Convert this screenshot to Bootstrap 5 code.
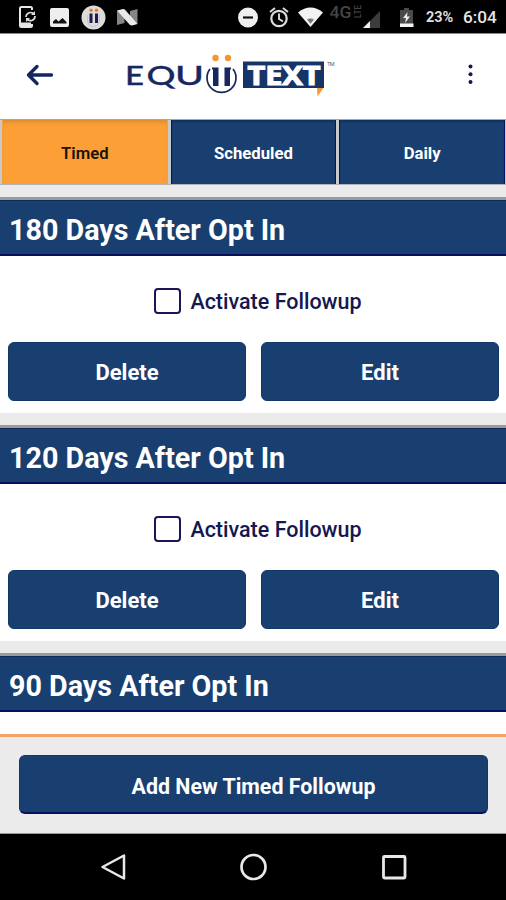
<!DOCTYPE html>
<html lang="en">
<head>
<meta charset="utf-8">
<meta name="viewport" content="width=device-width, initial-scale=1">
<title>EquiiText – Timed Followups</title>
<link href="https://cdn.jsdelivr.net/npm/bootstrap@5.3.0/dist/css/bootstrap.min.css" rel="stylesheet">
<style>
  :root { --navy: #183f70; --ink: #15174f; --orange: #fc9f36; --mist: #ebebeb; }
  body { font-family: Roboto, "Liberation Sans", sans-serif; background: #fff; }
  svg { display: block; flex: none; }
  .screen { height: 900px; width: 506px; }
  .status-bar { height: 34px; padding: 2px 10px 0 18px; border-bottom: 1px solid #8d888b; }
  .status-bar svg { margin-top: -2px; }
  .status-pct { font-size: 14.5px; width: 37px; letter-spacing: -.1px; color: #ddd; padding-top: 1px; }
  .status-time { font-size: 17.2px; width: 33px; color: #e6e6e6; padding-top: 1px; }
  .app-bar { height: 85px; padding: 0 30px 3px 26px; }
  .brand-logo { margin-left: 72px; }
  .app-tabs { height: 66px; background: #c9c9cc; border-top: 1px solid #aaa; border-bottom: 1px solid #b4b4b6; padding: 0 1px 0 2px; gap: 3px; }
  .app-tabs .nav-link { border-radius: 0; background: var(--navy); color: #fff; font-size: 16.7px; font-weight: 700; padding: 3px 0 0; border: solid #06146a; border-width: 0 1px 0 1px; box-shadow: inset 0 2px 1px #12315c; }
  .app-tabs .nav-link.active { background: var(--orange); color: #1c1208; font-weight: 600; border-color: var(--orange); box-shadow: inset 0 4px 4px -2px #d58a35; }
  .followups { height: 549px; background: var(--mist); }
  .followup { height: 216px; margin-top: 12px; border-top: 3px solid #9b9b9b; background: #fff; }
  .followup h2 { height: 56px; background: var(--navy); color: #fff; font-size: 28.7px; font-weight: 700; padding: 5px 0 0 9px; border-bottom: 2px solid #06105f; border-top: 1px solid #0d2c59; }
  .activate { height: 86px; padding-top: 7px; padding-left: 10px; gap: 9px; color: var(--ink); font-size: 21.5px; font-weight: 500; }
  .activate .form-check-input { width: 27px; height: 26px; margin: 0 0 4px; border: 2px solid #1a1458; border-radius: 4px; }
  .btn-navy, .btn-navy:hover { background: var(--navy); color: #fff; font-size: 22px; font-weight: 700; height: 59px; border: 1px solid #123869; border-radius: 6px; padding: 2px 0 0; }
  .pair { padding: 0 7px 0 8px; gap: 15px; }
  .footer-bar { height: 100px; background: var(--mist); border-top: 3px solid #f3a268; padding: 18px 18px 0 19px; border-bottom: 1px solid #999; }
  .footer-bar .btn-navy { border-bottom: 2px solid #05105f; font-size: 21.4px; padding-top: 6px; }
  .nav-keys { height: 67px; padding-bottom: 2px; }
</style>
</head>
<body>
<div class="screen d-flex flex-column overflow-hidden">
  <div class="status-bar bg-black text-white d-flex align-items-center flex-shrink-0">
    <svg width="32" height="34" viewBox="18 0 32 34"><path d="M32 10V8.500q0-1.500-1.500-1.500h-9q-1.500 0-1.500 1.500v17q0 1.500 1.500 1.500h9q1.500 0 1.500-1.500V24" fill="none" stroke="#e6e6e6" stroke-width="2"/><path d="M20 22.500h11v4H20z" fill="#e6e6e6"/><path d="M26 17a4.500 4.500 0 0 1 7.500-3.300M35 16a4.500 4.500 0 0 1-7.500 3.500" fill="none" stroke="#ddd" stroke-width="1.700"/><path d="M31 15l4-4v4zM30 18l-4 4v-4z" fill="#ddd"/></svg>
    <svg width="31" height="34" viewBox="50 0 31 34"><rect x="50" y="8" width="19" height="19" rx="2" fill="#eee"/><path d="M53 23.500v-2l3-2.500 2.500 2.500 4-3.500 4 4v1.500z" fill="#111"/></svg>
    <svg width="36" height="34" viewBox="81 0 36 34"><circle cx="93.500" cy="17.500" r="12" fill="#dcdcda"/><path d="M87.500 15v5.500a6 6 0 0 0 12 0V15" fill="none" stroke="#c2c4d2"/><path d="M89.500 13.500h3v9.500h-3zM95 13.500h3V23h-3z" fill="#191c55"/><circle cx="91" cy="10.300" r="1.700" fill="#e3812d"/><circle cx="96.500" cy="10.300" r="1.700" fill="#e3812d"/></svg>
    <svg width="22" height="34" viewBox="117 0 22 34"><path d="M117 10.500l7.500 4v8.500l-7.500 2zM130 11l7.500-2v15l-7.500-4z" fill="#858585"/><path d="M117 10.500l6-1.500q1.500 0 2.500 1.200L137.500 24l-5.500 1.500q-1.500 0-2.500-1z" fill="#e9e9e9"/></svg>
    <svg class="ms-auto" width="31" height="34" viewBox="238 0 31 34"><circle cx="248" cy="17.500" r="10" fill="#eee"/><path d="M243 17.500h10" stroke="#111" stroke-width="2.200"/></svg>
    <svg width="29" height="34" viewBox="269 0 29 34"><circle cx="279" cy="18.500" r="7.700" fill="none" stroke="#ddd" stroke-width="2.200"/><path d="M279 13.500v5.500l4 2.500M270 12l5-4M288 12l-5-4" fill="none" stroke="#ddd" stroke-width="1.900"/></svg>
    <svg width="30" height="34" viewBox="298 0 30 34"><path d="M298 12.500q12.500-10 25 0L310.500 27z" fill="#f2f2f2"/><path d="M307 19.500q3.500-2 7 0l-3.500 4.300z" fill="#777"/></svg>
    <svg width="72" height="34" viewBox="328 0 72 34"><text x="329.500" y="17.500" font-size="17" font-weight="500" fill="#454545" textLength="22" lengthAdjust="spacingAndGlyphs">4G</text><text transform="translate(360.500 18) rotate(-90)" font-size="9" font-weight="500" fill="#454545" textLength="13" lengthAdjust="spacingAndGlyphs">LTE</text><path d="M380 11v17h-17z" fill="#3c3c3c"/><path d="M370 21v7h-7z" fill="#eee"/></svg>
    <svg width="26" height="34" viewBox="400 0 26 34"><path d="M404 8h5v2h4v17h-13V10h4z" fill="#4a4a4a"/><path d="M400 23.500h13.500V27H400z" fill="#f4f4f4"/><path d="M407.500 12l-4.500 6h3l-1 5 5-6.500h-3z" fill="#eee"/></svg>
    <span class="status-pct fw-bold">23%</span>
    <span class="status-time fw-medium text-nowrap">6:04</span>
  </div>

  <header class="app-bar d-flex align-items-center flex-shrink-0 bg-white">
    <svg width="28" height="30" viewBox="0 0 28 30"><path d="M25.500 15H2.500M11 6.500L2.500 15l8.500 8.500" fill="none" stroke="#15265f" stroke-width="3.400" stroke-linecap="round" stroke-linejoin="round"/></svg>
    <svg class="brand-logo" width="212" height="46" viewBox="126 52 212 46" role="img" aria-label="EQUii TEXT">
      <g font-family="Lato, sans-serif" fill="#17275f" font-size="27" font-weight="500" stroke="#17275f" stroke-width=".3">
        <text x="125" y="84.500" textLength="19" lengthAdjust="spacingAndGlyphs">E</text>
        <text x="146.500" y="84.500" textLength="29" lengthAdjust="spacingAndGlyphs">Q</text>
        <text x="175" y="84.500" textLength="29" lengthAdjust="spacingAndGlyphs">U</text>
      </g>
      <path d="M210 69a14.500 14.500 0 1 0 23 0" fill="none" stroke="#17275f" stroke-width="1.700"/>
      <path d="M212 67.500h6.500V86H213V69.500h-1zM224.500 67.500h6.500v2h-1V86h-5.500z" fill="#17275f"/>
      <circle cx="215.500" cy="58" r="3.200" fill="#f6952b"/><circle cx="228" cy="58" r="3.200" fill="#f6952b"/>
      <path d="M243 61.500h81v26.500h-81z" fill="#173468"/>
      <path d="M317 88h6.500l-6 8.500z" fill="#f79a2f"/>
      <text x="247.500" y="85" font-family="Open Sans, sans-serif" font-size="27" font-weight="700" fill="#fff" stroke="#fff" stroke-width="1.200" textLength="73" lengthAdjust="spacingAndGlyphs">TEXT</text>
      <text x="327" y="65.500" font-size="5.500" fill="#555b7c" textLength="7.500">TM</text>
    </svg>
    <svg class="ms-auto" width="12" height="26" viewBox="0 0 12 26"><g fill="#14164f"><circle cx="6.500" cy="4.500" r="2"/><circle cx="6.500" cy="12.300" r="2"/><circle cx="6.500" cy="20" r="2"/></g></svg>
  </header>

  <ul class="app-tabs nav nav-justified flex-nowrap flex-shrink-0 align-items-stretch">
    <li class="nav-item d-flex"><a class="nav-link active w-100 d-flex align-items-center justify-content-center" href="#">Timed</a></li>
    <li class="nav-item d-flex"><a class="nav-link w-100 d-flex align-items-center justify-content-center" href="#">Scheduled</a></li>
    <li class="nav-item d-flex"><a class="nav-link w-100 d-flex align-items-center justify-content-center" href="#">Daily</a></li>
  </ul>

  <main class="followups overflow-hidden flex-shrink-0 d-flex flex-column">
    <section class="followup flex-shrink-0">
      <h2 class="mb-0 d-flex align-items-center">180 Days After Opt In</h2>
      <label class="activate d-flex align-items-center justify-content-center"><input class="form-check-input" type="checkbox">Activate Followup</label>
      <div class="pair d-flex"><button class="btn btn-navy flex-fill w-50">Delete</button><button class="btn btn-navy flex-fill w-50">Edit</button></div>
    </section>
    <section class="followup flex-shrink-0">
      <h2 class="mb-0 d-flex align-items-center">120 Days After Opt In</h2>
      <label class="activate d-flex align-items-center justify-content-center"><input class="form-check-input" type="checkbox">Activate Followup</label>
      <div class="pair d-flex"><button class="btn btn-navy flex-fill w-50">Delete</button><button class="btn btn-navy flex-fill w-50">Edit</button></div>
    </section>
    <section class="followup flex-shrink-0">
      <h2 class="mb-0 d-flex align-items-center">90 Days After Opt In</h2>
    </section>
  </main>

  <footer class="footer-bar flex-shrink-0"><button class="btn btn-navy w-100">Add New Timed Followup</button></footer>

  <nav class="nav-keys bg-black d-flex justify-content-center align-items-center flex-shrink-0">
    <svg width="140" height="30" viewBox="0 0 140 30"><path d="M81 3.500v23L59.500 15z" fill="none" stroke="#e8e8e8" stroke-width="2.500" stroke-linejoin="round"/></svg>
    <svg width="140" height="30" viewBox="0 0 140 30"><circle cx="70.500" cy="15" r="12" fill="none" stroke="#e8e8e8" stroke-width="2.700"/></svg>
    <svg width="140" height="30" viewBox="0 0 140 30"><rect x="60.500" y="4.500" width="21.500" height="21.500" rx="1" fill="none" stroke="#e8e8e8" stroke-width="2.800"/></svg>
  </nav>
</div>
<script src="https://cdn.jsdelivr.net/npm/bootstrap@5.3.0/dist/js/bootstrap.bundle.min.js"></script>
</body>
</html>
